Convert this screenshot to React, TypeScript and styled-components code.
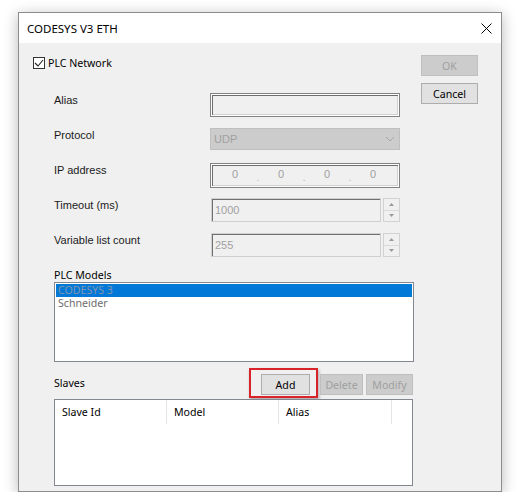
import styled, { createGlobalStyle } from "styled-components";

const GlobalStyle = createGlobalStyle`
  html, body {
    margin: 0;
    background: #ffffff;
  }
`;

const UI_FONT = `"Segoe UI", "Noto Sans", "Open Sans", sans-serif`;
const SANS_FONT = `"Liberation Sans", Arial, sans-serif`;

const Page = styled.div`
  padding: 12px 0 0 18px;
`;

const Window = styled.div`
  width: 484px;
  height: 480px;
  box-sizing: border-box;
  border: 1px solid #8c8c8c;
  background: #f0f0f0;
  box-shadow: 0 3px 14px rgba(0, 0, 0, 0.28);
  display: flex;
  flex-direction: column;
`;

const TitleBar = styled.div`
  height: 30px;
  background: #ffffff;
  display: flex;
  align-items: center;
  justify-content: space-between;
  padding: 0 9px 0 8px;
  font-family: ${UI_FONT};
  font-size: 11.5px;
  color: #000;
`;

const Body = styled.div`
  display: flex;
  padding: 12px 0 0 14px;
`;

const Left = styled.div`
  width: 381px;
  display: flex;
  flex-direction: column;
`;

const Right = styled.div`
  margin-left: 7px;
  width: 57px;
  display: flex;
  flex-direction: column;
  gap: 7px;
`;

const CheckRow = styled.label`
  height: 16px;
  display: flex;
  align-items: center;
  gap: 3px;
  font-family: ${UI_FONT};
  font-size: 10.6px;
  color: #000;
`;

const CheckBox = styled.span`
  width: 12px;
  height: 12px;
  box-sizing: border-box;
  border: 1px solid #333;
  background: #fff;
  display: flex;
  align-items: center;
  justify-content: center;
`;

const Form = styled.div`
  margin: 22px 0 0 21px;
  display: grid;
  grid-template-columns: 156px 190px;
  grid-auto-rows: 35px;
  align-items: start;
`;

const Label = styled.div`
  font-family: ${SANS_FONT};
  font-size: 11px;
  line-height: 14px;
  color: #1a1a1a;
`;

const Sunken = styled.div<{ $h: number }>`
  height: ${(p) => p.$h}px;
  box-sizing: border-box;
  border: 1px solid #828282;
  background: #f0f0f0;
  box-shadow: inset 0 0 0 1px #fff, inset 2px 2px 0 0 #6e6e6e,
    inset -2px -2px 0 0 #d0d0d0;
  display: flex;
  align-items: center;
  font-family: ${SANS_FONT};
  font-size: 11px;
  color: #a0a0a0;
`;

const Combo = styled.div`
  height: 22px;
  box-sizing: border-box;
  border: 1px solid #bfbfbf;
  background: #cccccc;
  display: flex;
  align-items: center;
  justify-content: space-between;
  padding: 0 4px 0 3px;
  font-family: ${SANS_FONT};
  font-size: 11px;
  color: #a0a0a0;
`;

const IpSeg = styled.span<{ $dot?: boolean }>`
  width: ${(p) => (p.$dot ? 8 : 38)}px;
  text-align: center;
  color: ${(p) => (p.$dot ? "#b8b8b8" : "#a0a0a0")};
  padding-top: ${(p) => (p.$dot ? 3 : 0)}px;
`;

const IpRow = styled.div`
  display: flex;
  padding-left: 5px;
`;

const SpinField = styled.div`
  height: 24px;
  display: flex;
  gap: 2px;
`;

const SpinInput = styled.div`
  flex: 1;
  margin-left: 1px;
  box-sizing: border-box;
  border: 1px solid #cfcfcf;
  box-shadow: inset 1px 1px 0 0 #707070;
  background: #f0f0f0;
  display: flex;
  align-items: center;
  padding-left: 3px;
  font-family: ${SANS_FONT};
  font-size: 11px;
  color: #a0a0a0;
`;

const SpinButtons = styled.div`
  width: 17px;
  box-sizing: border-box;
  border: 1px solid #d2d2d2;
  display: flex;
  flex-direction: column;
`;

const SpinHalf = styled.div<{ $bottom?: boolean }>`
  flex: 1;
  display: flex;
  align-items: center;
  justify-content: center;
  background: #f0f0f0;
  border-top: ${(p) => (p.$bottom ? "1px solid #dadada" : "none")};
`;

const SectionLabel = styled.div`
  font-family: ${UI_FONT};
  font-size: 10.6px;
  line-height: 14px;
  color: #000;
  margin-left: 21px;
`;

const ListBox = styled.div`
  margin-left: 21px;
  width: 360px;
  height: 80px;
  box-sizing: border-box;
  border: 1px solid #828790;
  background: #fff;
  padding: 1px;
  font-family: ${UI_FONT};
  font-size: 10.6px;
`;

const ListItem = styled.div<{ $selected?: boolean }>`
  height: 13px;
  line-height: 13px;
  padding-left: 2px;
  background: ${(p) => (p.$selected ? "#0078d7" : "transparent")};
  color: ${(p) => (p.$selected ? "#8195b0" : "#6d6d6d")};
`;

const SlavesRow = styled.div`
  margin: 6px 0 0 21px;
  width: 359px;
  display: flex;
  align-items: flex-start;
`;

const SlavesLabel = styled(SectionLabel)`
  flex: 1;
  margin: 8px 0 0 0;
`;

const Highlight = styled.div`
  border: 2px solid #d8232a;
  padding: 4px 6px 1px 10px;
  box-shadow: 1px 2px 3px rgba(0, 0, 0, 0.3);
`;

const Button = styled.div<{ $w: number; $disabled?: boolean; $ml?: number; $mt?: number }>`
  width: ${(p) => p.$w}px;
  height: 21px;
  margin-left: ${(p) => p.$ml ?? 0}px;
  margin-top: ${(p) => p.$mt ?? 0}px;
  box-sizing: border-box;
  border: 1px solid ${(p) => (p.$disabled ? "#bfbfbf" : "#adadad")};
  background: ${(p) => (p.$disabled ? "#cccccc" : "#e1e1e1")};
  color: ${(p) => (p.$disabled ? "#a0a0a0" : "#000")};
  display: flex;
  align-items: center;
  justify-content: center;
  font-family: ${UI_FONT};
  font-size: 10.6px;
`;

const ListView = styled.div`
  margin: 1px 0 0 21px;
  width: 359px;
  height: 87px;
  box-sizing: border-box;
  border: 1px solid #828790;
  background: #fff;
`;

const Header = styled.div`
  height: 24px;
  display: grid;
  grid-template-columns: 112px 112px 113px;
  font-family: ${UI_FONT};
  font-size: 10.6px;
  color: #000;
`;

const HeaderCell = styled.div`
  border-right: 1px solid #e5e5e5;
  padding-left: 7px;
  display: flex;
  align-items: center;
`;

function Chevron() {
  return (
    <svg width="10" height="6" viewBox="0 0 10 6">
      <path d="M1 1 L5 5 L9 1" fill="none" stroke="#a8a8a8" strokeWidth="1" />
    </svg>
  );
}

function Arrow({ down }: { down?: boolean }) {
  return (
    <svg width="5" height="3" viewBox="0 0 5 3">
      <path d={down ? "M0 0 H5 L2.5 3 Z" : "M0 3 H5 L2.5 0 Z"} fill="#9a9a9a" />
    </svg>
  );
}

function Spin({ value }: { value: string }) {
  return (
    <SpinField>
      <SpinInput>{value}</SpinInput>
      <SpinButtons>
        <SpinHalf>
          <Arrow />
        </SpinHalf>
        <SpinHalf $bottom>
          <Arrow down />
        </SpinHalf>
      </SpinButtons>
    </SpinField>
  );
}

function App() {
  return (
    <Page>
      <GlobalStyle />
      <Window>
        <TitleBar>
          <span>CODESYS V3 ETH</span>
          <svg width="11" height="11" viewBox="0 0 11 11">
            <path d="M0.5 0.5 L10.5 10.5 M10.5 0.5 L0.5 10.5" stroke="#000" strokeWidth="1" />
          </svg>
        </TitleBar>
        <Body>
          <Left>
            <CheckRow>
              <CheckBox>
                <svg width="10" height="10" viewBox="0 0 10 10">
                  <path d="M1 5 L4 8 L9 2" fill="none" stroke="#222" strokeWidth="1.1" />
                </svg>
              </CheckBox>
              PLC Network
            </CheckRow>
            <Form>
              <Label>Alias</Label>
              <Sunken $h={24} />
              <Label>Protocol</Label>
              <Combo>
                UDP
                <Chevron />
              </Combo>
              <Label>IP address</Label>
              <Sunken $h={25}>
                <IpRow>
                  <IpSeg>0</IpSeg>
                  <IpSeg $dot>.</IpSeg>
                  <IpSeg>0</IpSeg>
                  <IpSeg $dot>.</IpSeg>
                  <IpSeg>0</IpSeg>
                  <IpSeg $dot>.</IpSeg>
                  <IpSeg>0</IpSeg>
                </IpRow>
              </Sunken>
              <Label>Timeout (ms)</Label>
              <Spin value="1000" />
              <Label>Variable list count</Label>
              <Spin value="255" />
            </Form>
            <SectionLabel>PLC Models</SectionLabel>
            <ListBox>
              <ListItem $selected>CODESYS 3</ListItem>
              <ListItem>Schneider</ListItem>
            </ListBox>
            <SlavesRow>
              <SlavesLabel>Slaves</SlavesLabel>
              <Highlight>
                <Button $w={49}>Add</Button>
              </Highlight>
              <Button $w={43} $disabled $ml={2} $mt={6}>
                Delete
              </Button>
              <Button $w={47} $disabled $ml={3} $mt={6}>
                Modify
              </Button>
            </SlavesRow>
            <ListView>
              <Header>
                <HeaderCell>Slave Id</HeaderCell>
                <HeaderCell>Model</HeaderCell>
                <HeaderCell>Alias</HeaderCell>
              </Header>
            </ListView>
          </Left>
          <Right>
            <Button $w={57} $disabled>
              OK
            </Button>
            <Button $w={57}>Cancel</Button>
          </Right>
        </Body>
      </Window>
    </Page>
  );
}

export default App;
